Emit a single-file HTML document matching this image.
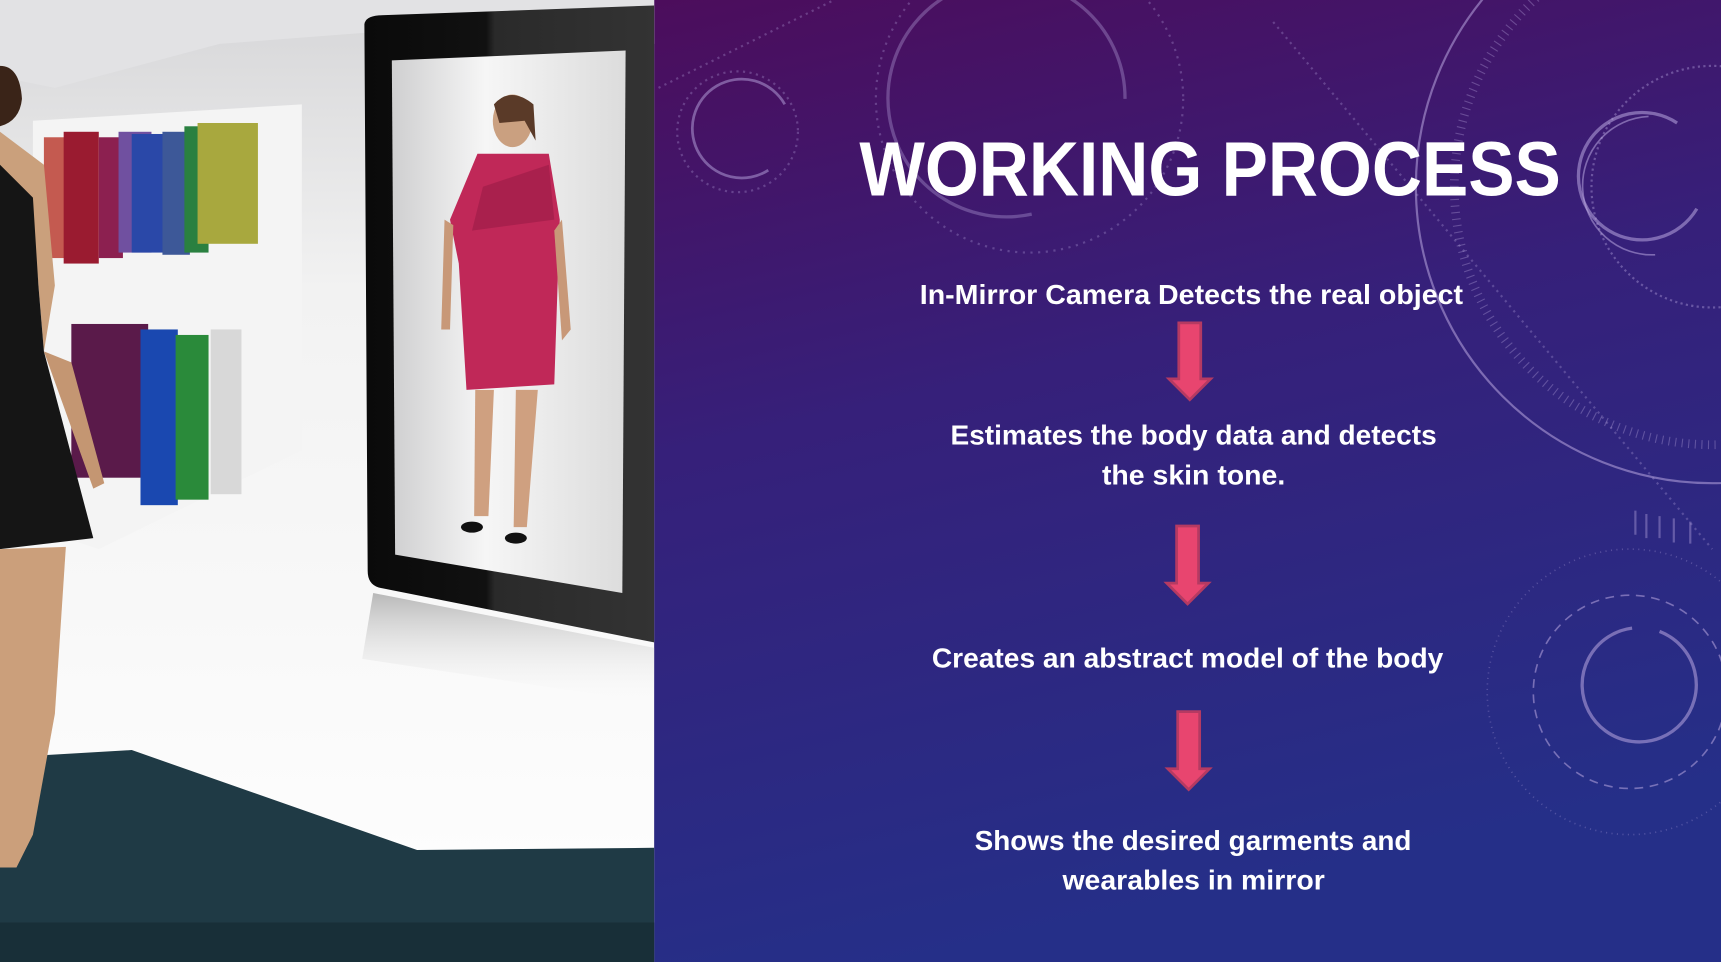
<!DOCTYPE html>
<html><head><meta charset="utf-8"><style>
html,body{margin:0;padding:0;width:1721px;height:962px;overflow:hidden;background:#3a1a70}
svg{display:block}
</style></head><body>
<svg width="1721" height="962" viewBox="0 0 1568 876" preserveAspectRatio="none" xmlns="http://www.w3.org/2000/svg">
<defs>
<linearGradient id="bg" x1="0" y1="0" x2="0.25" y2="1">
<stop offset="0" stop-color="#4c0d5c"/><stop offset="0.45" stop-color="#36207a"/><stop offset="1" stop-color="#252f88"/>
</linearGradient>
<linearGradient id="room" x1="0" y1="0" x2="0" y2="1">
<stop offset="0" stop-color="#d6d6d8"/><stop offset="0.3" stop-color="#f2f2f2"/><stop offset="1" stop-color="#ffffff"/>
</linearGradient>
<linearGradient id="screen" x1="0" y1="0" x2="1" y2="0">
<stop offset="0" stop-color="#cfcfd0"/><stop offset="0.4" stop-color="#f6f6f6"/><stop offset="1" stop-color="#dcdcdc"/>
</linearGradient>
<linearGradient id="frame" x1="0" y1="0" x2="1" y2="0">
<stop offset="0" stop-color="#0a0a0a"/><stop offset="0.42" stop-color="#111"/><stop offset="0.45" stop-color="#2a2a2a"/><stop offset="1" stop-color="#333"/>
</linearGradient>
<linearGradient id="shadow" x1="0" y1="0" x2="0" y2="1">
<stop offset="0" stop-color="#b8b8b8"/><stop offset="1" stop-color="#fafafa" stop-opacity="0"/>
</linearGradient>
</defs>
<rect x="596" y="0" width="972" height="876" fill="url(#bg)"/>
<g fill="none" stroke="#b9a8e0" stroke-opacity="0.55" stroke-width="2">
<circle cx="1560" cy="170" r="270"/>
<circle cx="1560" cy="170" r="235" stroke-dasharray="1 5" stroke-width="8" stroke-opacity="0.35"/>
<circle cx="1560" cy="170" r="110" stroke-dasharray="2 3" stroke-opacity="0.4"/>
<path d="M1528 112 A58 58 0 1 0 1546 190" stroke-width="3"/>
<path d="M1502 106 A62 62 0 1 0 1508 232" stroke-width="1.5"/>
<path d="M1487 572 A52 52 0 1 0 1512 575" stroke-width="3"/>
<circle cx="1485" cy="630" r="88" stroke-dasharray="8 6" stroke-width="1.5"/>
<circle cx="1485" cy="630" r="130" stroke-dasharray="1 4" stroke-width="1.5" stroke-opacity="0.3"/>
<path d="M940 195 A108 108 0 1 1 1025 90" stroke-width="3" stroke-opacity="0.35"/>
<circle cx="938" cy="90" r="140" stroke-dasharray="2 5" stroke-opacity="0.3"/>
<path d="M715 95 A45 45 0 1 0 700 155" stroke-width="2.5" stroke-opacity="0.5"/>
<circle cx="672" cy="120" r="55" stroke-dasharray="2 4" stroke-opacity="0.3"/>
<path d="M1160 20 L1560 500" stroke-dasharray="2 4" stroke-opacity="0.3"/>
<path d="M600 80 L760 0" stroke-dasharray="2 4" stroke-opacity="0.3"/>
<path d="M1490 465v22M1500 468v22M1512 470v20M1525 472v22M1540 475v20" stroke-width="2" stroke-opacity="0.4"/>
</g>
<rect x="0" y="0" width="596" height="876" fill="url(#room)"/>
<path d="M0 0H596V40L330 30L200 40L50 80L0 70Z" fill="#e2e2e4"/>
<path d="M30 110L275 95L275 410L90 500L30 480Z" fill="#f4f4f4"/>
<path d="M340 540L596 590V640L330 600Z" fill="url(#shadow)"/>
<path d="M0 690L120 683L380 774L596 772V876H0Z" fill="#1f3a45"/>
<path d="M0 840H596V876H0Z" fill="#182f38"/>
<g>
<rect x="40" y="125" width="20" height="110" fill="#c45a50"/>
<rect x="58" y="120" width="32" height="120" fill="#9a1b30"/>
<rect x="90" y="125" width="22" height="110" fill="#8c2050"/>
<rect x="108" y="120" width="30" height="110" fill="#7050a0"/>
<rect x="120" y="122" width="30" height="108" fill="#2a48a8"/>
<rect x="148" y="120" width="25" height="112" fill="#3d5898"/>
<rect x="168" y="115" width="22" height="115" fill="#2a8040"/>
<rect x="180" y="112" width="55" height="110" fill="#a8a83e"/>
<rect x="65" y="295" width="70" height="140" fill="#5a1a4a"/>
<rect x="128" y="300" width="34" height="160" fill="#1a48b0"/>
<rect x="160" y="305" width="30" height="150" fill="#2a8a3a"/>
<rect x="192" y="300" width="28" height="150" fill="#d8d8d8"/>
</g>
<path d="M332 22Q333 15 345 14L596 5V585L345 535Q335 532 335 520Z" fill="url(#frame)"/>
<path d="M357 55L570 46L567 540L360 505Z" fill="url(#screen)"/>
<g>
<ellipse cx="467" cy="110" rx="18" ry="24" fill="#caa080"/>
<path d="M450 95Q465 78 486 95L488 128L478 110L455 112Z" fill="#5a3a28"/>
<path d="M435 140L500 140L510 200L505 350L425 355L418 240L410 200Z" fill="#c02858"/>
<path d="M440 170L500 150L505 200L430 210Z" fill="#a01c48" opacity="0.7"/>
<path d="M405 200L413 205L410 300L402 300Z" fill="#c89878"/>
<path d="M512 200L520 300L512 310L505 210Z" fill="#c89878"/>
<path d="M433 355L450 355L445 470L432 470Z" fill="#cfa080"/>
<path d="M470 355L490 355L480 480L468 480Z" fill="#cfa080"/>
<ellipse cx="430" cy="480" rx="10" ry="5" fill="#111"/>
<ellipse cx="470" cy="490" rx="10" ry="5" fill="#111"/>
</g>
<g>
<path d="M0 60Q18 60 20 90Q18 110 0 115Z" fill="#3a2418"/>
<path d="M0 120L40 150L50 260L40 320L30 200L0 170Z" fill="#caa07c"/>
<path d="M0 150L30 180L35 260L40 320L85 490L0 500Z" fill="#151515"/>
<path d="M0 500L60 498L50 650L30 760L15 790L0 790Z" fill="#cb9f7b"/>
<path d="M40 320L65 330L95 440L85 445Z" fill="#c49672"/>
</g>
<g font-family="'Liberation Sans',sans-serif" font-weight="bold" fill="#fff">
<text x="783" y="178" font-size="70" textLength="639" lengthAdjust="spacingAndGlyphs">WORKING PROCESS</text>
<text x="838" y="277" font-size="25" textLength="495" lengthAdjust="spacingAndGlyphs">In-Mirror Camera Detects the real object</text>
<text x="866" y="405" font-size="25" textLength="443" lengthAdjust="spacingAndGlyphs">Estimates the body data and detects</text>
<text x="1004" y="441" font-size="25" textLength="167" lengthAdjust="spacingAndGlyphs">the skin tone.</text>
<text x="849" y="608" font-size="25" textLength="466" lengthAdjust="spacingAndGlyphs">Creates an abstract model of the body</text>
<text x="888" y="774" font-size="25" textLength="398" lengthAdjust="spacingAndGlyphs">Shows the desired garments and</text>
<text x="968" y="810" font-size="25" textLength="239" lengthAdjust="spacingAndGlyphs">wearables in mirror</text>
</g>
<g fill="#e8456f" stroke="#b53a62" stroke-width="2.5" stroke-linejoin="miter">
<path d="M1074 294H1094V345H1103L1084 364L1065 345H1074Z"/>
<path d="M1072 479H1092V531H1101L1082 550L1063 531H1072Z"/>
<path d="M1073 648H1093V700H1102L1083 719L1064 700H1073Z"/>
</g>
</svg>
</body></html>
